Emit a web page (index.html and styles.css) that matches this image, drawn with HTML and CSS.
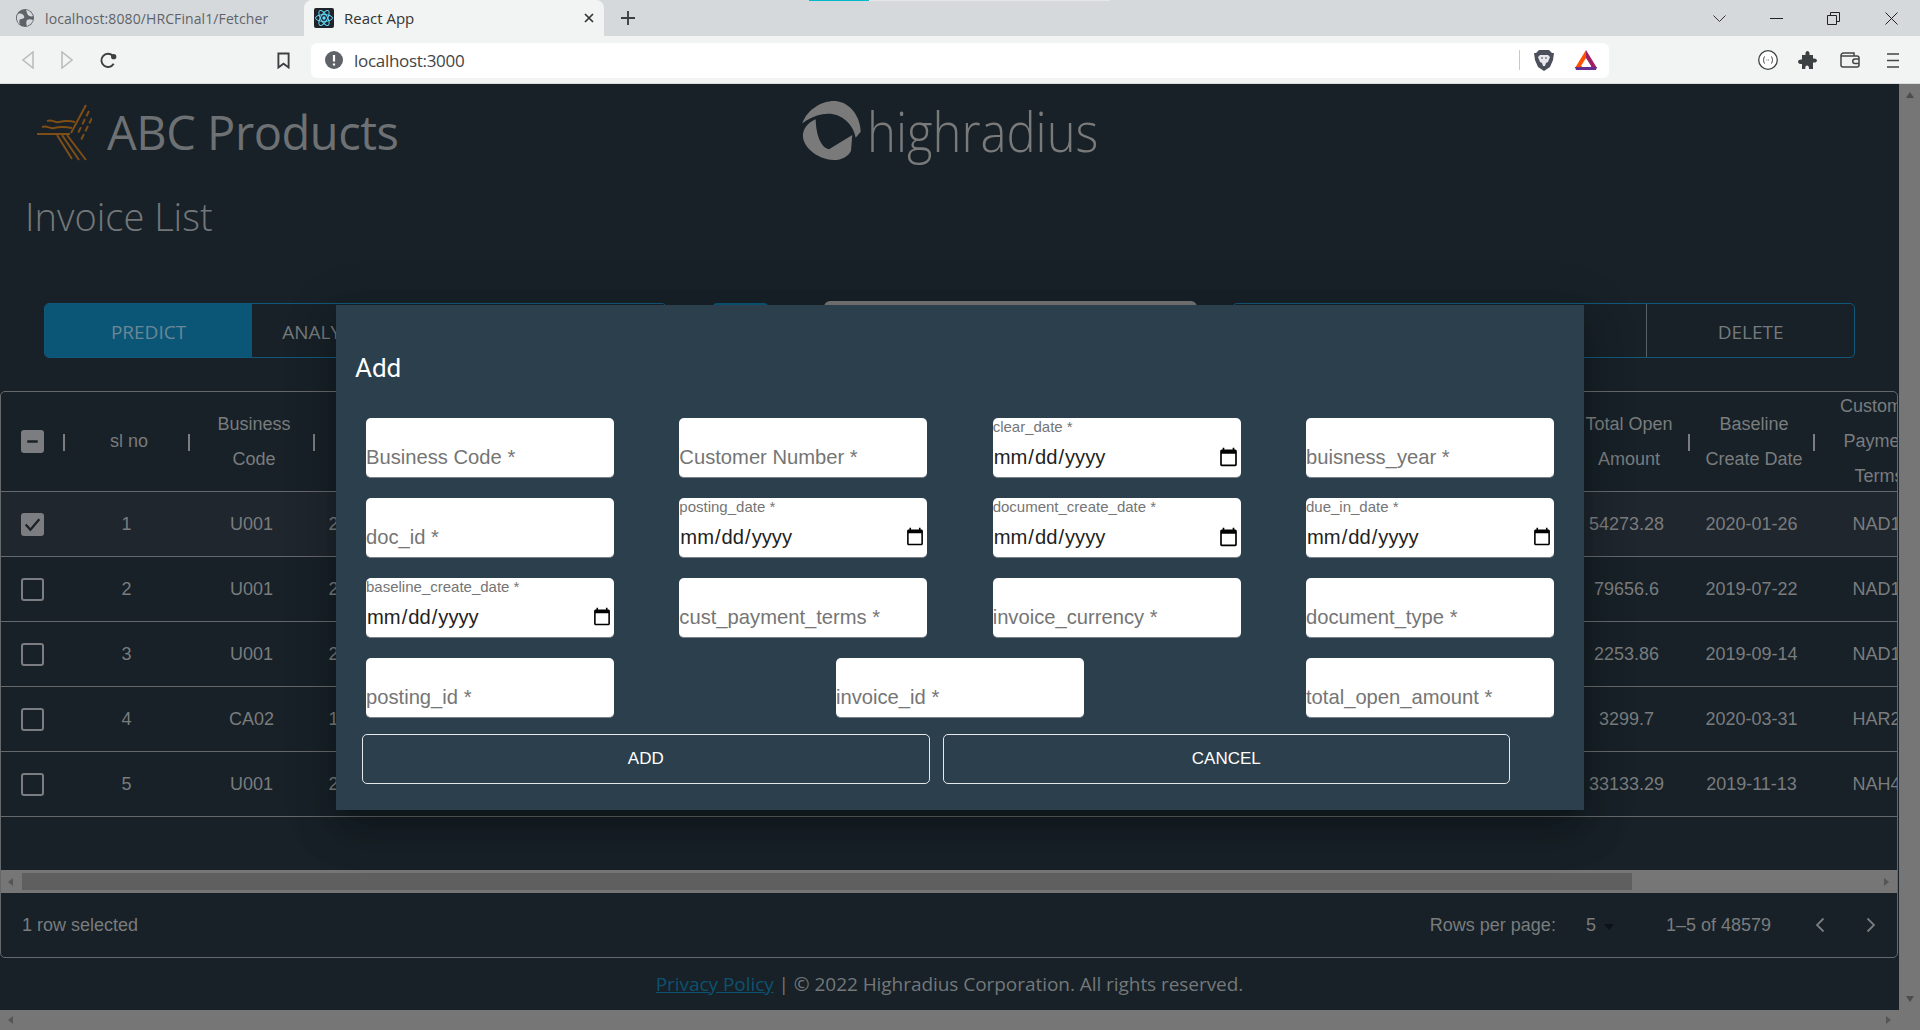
FILE: index.html
```html
<!DOCTYPE html>
<html lang="en">
<head>
<meta charset="utf-8">
<title>React App</title>
<link rel="stylesheet" href="styles.css">
</head>
<body>
<header class="chrome">
  <div class="tabstrip">
    <div class="load-line"></div>
    <div class="tab tab-off">
      <svg class="fav" viewBox="0 0 18 18"><circle cx="9" cy="9" r="9" fill="#5f6368"/><path d="M2 5c3-1 5 0 6 2s-1 3-3 3-2 3-1 6C1 13 0 8 2 5zM10 1c3 0 6 3 7 6-2 1-4 0-5-1s-1-3-2-5zM11 11c2-1 4-1 6 0-1 3-3 5-6 6-1-2-1-4 0-6z" fill="#d5d9dc"/></svg>
      <span class="tab-title">localhost:8080/HRCFinal1/Fetcher</span>
    </div>
    <div class="tab tab-on">
      <svg class="fav-react" viewBox="0 0 20 20"><rect width="20" height="20" rx="2" fill="#20232a"/><g fill="none" stroke="#61dafb" stroke-width="1"><ellipse cx="10" cy="10" rx="8.5" ry="3.4"/><ellipse cx="10" cy="10" rx="8.5" ry="3.4" transform="rotate(60 10 10)"/><ellipse cx="10" cy="10" rx="8.5" ry="3.4" transform="rotate(120 10 10)"/></g><circle cx="10" cy="10" r="1.7" fill="#61dafb"/></svg>
      <span class="tab-title tab-title-on">React App</span>
      <svg class="tab-x" viewBox="0 0 12 12"><path d="M2 2l8 8M10 2l-8 8" stroke="#333" stroke-width="1.7"/></svg>
    </div>
    <svg class="newtab" viewBox="0 0 16 16"><path d="M8 1v14M1 8h14" stroke="#3c4043" stroke-width="1.9"/></svg>
    <div class="winctl">
      <svg class="w-chev" viewBox="0 0 13 7"><path d="M.5.5l6 6 6-6" fill="none" stroke="#333"/></svg>
      <svg class="w-min" viewBox="0 0 13 1"><path d="M0 .5h13" stroke="#222"/></svg>
      <svg class="w-res" viewBox="0 0 13 13"><path d="M.5 3.5h9v9h-9zM3.5 3V.5h9v9H10" fill="none" stroke="#222"/></svg>
      <svg class="w-close" viewBox="0 0 13 13"><path d="M.5.5l12 12M12.5.5l-12 12" stroke="#222"/></svg>
    </div>
  </div>
  <div class="toolbar">
    <svg class="t-back" viewBox="0 0 12 18"><path d="M11 1v16L1 9z" fill="none" stroke="#bdbdbd" stroke-width="1.6"/></svg>
    <svg class="t-fwd" viewBox="0 0 12 18"><path d="M1 1v16l10-8z" fill="none" stroke="#bdbdbd" stroke-width="1.6"/></svg>
    <svg class="t-reload" viewBox="0 0 18 18"><path d="M14.5 12.5A7 7 0 1 1 13.5 4" fill="none" stroke="#3c4043" stroke-width="2"/><circle cx="14.5" cy="5" r="2.8" fill="#3c4043"/></svg>
    <svg class="t-mark" viewBox="0 0 14 18"><path d="M1.5 1.5h11v15L7 12.5l-5.500 4z" fill="none" stroke="#3c4043" stroke-width="2"/></svg>
    <div class="omnibox">
      <svg class="o-info" viewBox="0 0 18 18"><circle cx="9" cy="9" r="9" fill="#5f6368"/><path d="M9 4v6.500M9 12.500v2" stroke="#fff" stroke-width="2.200"/></svg>
      <span class="url">localhost:3000</span>
      <span class="o-div"></span>
      <svg class="o-lion" viewBox="0 0 20 22"><path d="M5 1h10l3 3 2 0-1 7-3 7-6 4-6-4-3-7-1-7 2 0z" fill="#4b4f5c"/><path d="M6 6h8l2 2-2 5-2 1-1 3H9l-1-3-2-1-2-5z" fill="#e8e8ec"/><path d="M7 9h2M11 9h2" stroke="#4b4f5c" stroke-width="1.200"/></svg>
      <svg class="o-tri" viewBox="0 0 22 20"><path d="M11 0L0 18h6L11 9z" fill="#ff5000"/><path d="M11 0l11 18h-5L11 9z" fill="#9e1f63"/><path d="M0 17h22l-1 3H1z" fill="#662d91"/><path d="M6 16h10l-5-8z" fill="#fff"/></svg>
    </div>
    <svg class="t-ring" viewBox="0 0 20 20"><circle cx="10" cy="10" r="9.300" fill="#fff" stroke="#444" stroke-width="1.300"/><path d="M7 6.500c-1.500 0-1 2.500-1.500 3.500.5 1 0 3.500 1.500 3.500M13 6.500c1.500 0 1 2.500 1.500 3.500-.5 1 0 3.500-1.500 3.500M8.500 10h.8M10 10h.8" fill="none" stroke="#555"/></svg>
    <svg class="t-puzzle" viewBox="0 0 19 18"><path d="M4 4h3.500C7 1 8.500 0 9.500 0s2.500 1 2 4H15v3.500c3-.5 4 1 4 2s-1 2.500-4 2V18h-4c.3-2.500-1-3.500-2-3.500S7 15.500 7.300 18H4v-5c-2.500.5-4-1-4-2.300S1.500 8 4 8.500z" fill="#3c4043"/></svg>
    <svg class="t-wallet" viewBox="0 0 20 16"><path d="M1 4V3.500A2.500 2.500 0 0 1 3.500 1H14v3M1 4h16a2 2 0 0 1 2 2v7a2 2 0 0 1-2 2H3a2 2 0 0 1-2-2zM19 7h-4a2 2 0 0 0 0 4.500h4" fill="none" stroke="#444" stroke-width="1.500"/></svg>
    <svg class="t-menu" viewBox="0 0 12 15"><path d="M0 1h12M0 7.500h12M0 14h12" stroke="#444" stroke-width="1.500"/></svg>
  </div>
</header>

<div class="viewport">
  <div class="page">
    <div class="content">
      <div class="brand">
        <svg class="abc-logo" viewBox="0 0 62 60">
          <g fill="none" stroke="#7f4e17" stroke-width="2">
            <path d="M56 3L41 31"/>
            <path d="M59 9L47 33" stroke-dasharray="6 3"/>
            <path d="M62 16L50 40" stroke-dasharray="6 3"/>
            <path d="M7 32h33"/>
            <path d="M17 19c5-2 8 2 12 1s8-2 16 0"/>
            <path d="M12 25c5-2 8 2 12 1s8-2 18 0"/>
            <path d="M27 33l15 24M32 33l17 25M37 33l19 25"/>
          </g>
        </svg>
        <span class="abc-name">ABC Products</span>
        <svg class="hr-logo" viewBox="0 0 360 240">
          <path d="M40 100C55 55 105 30 140 33c45 4 75 50 75 92l-15 18c-8-45-50-80-100-70-25 5-45 15-60 27z" fill="#7a7a7a"/>
          <path d="M80 88C50 100 40 125 42 142c4 35 50 68 92 68 25 0 45-12 52-28l4-47-70 43c-25-5-40-45-40-96z" fill="#7a7a7a"/>
        </svg>
        <span class="hr-name">highradius</span>
      </div>
      <h1 class="page-title">Invoice List</h1>
      <div class="actions">
        <div class="btn-group">
          <span class="act act-on">PREDICT</span>
          <span class="act">ANALYTICS VIEW</span>
          <span class="act">ADVANCED SEARCH</span>
        </div>
        <span class="search-btn"></span>
        <span class="search-box"></span>
        <div class="btn-group">
          <span class="act">ADD</span>
          <span class="act">EDIT</span>
          <span class="act act-div">DELETE</span>
        </div>
      </div>

      <section class="card">
        <div class="tbl">
          <div class="tr th">
            <div class="cell sep"><span class="cb cb-on"><svg viewBox="0 0 22 22"><path d="M6 11h10" stroke="#1b2228" stroke-width="2.500"/></svg></span></div>
            <div class="cell sep hd">sl no</div>
            <div class="cell sep hd">Business<br>Code</div>
            <div class="cell"></div>
            <div class="cell"></div>
            <div class="cell sep hd">Total Open<br>Amount</div>
            <div class="cell sep hd">Baseline<br>Create Date</div>
            <div class="cell hd">Customer<br>Payment<br>Terms</div>
          </div>
          <div class="tr selected">
            <div class="cell"><span class="cb cb-on"><svg viewBox="0 0 22 22"><path d="M4.500 11l4.500 5 8.500-10" fill="none" stroke="#1b2228" stroke-width="2.200"/></svg></span></div>
            <div class="cell">1</div><div class="cell">U001</div><div class="cell num">200769623</div><div class="cell"></div>
            <div class="cell">54273.28</div><div class="cell">2020-01-26</div><div class="cell">NAD1</div>
          </div>
          <div class="tr">
            <div class="cell"><span class="cb"></span></div>
            <div class="cell">2</div><div class="cell">U001</div><div class="cell num">200980828</div><div class="cell"></div>
            <div class="cell">79656.6</div><div class="cell">2019-07-22</div><div class="cell">NAD1</div>
          </div>
          <div class="tr">
            <div class="cell"><span class="cb"></span></div>
            <div class="cell">3</div><div class="cell">U001</div><div class="cell num">200792734</div><div class="cell"></div>
            <div class="cell">2253.86</div><div class="cell">2019-09-14</div><div class="cell">NAD1</div>
          </div>
          <div class="tr">
            <div class="cell"><span class="cb"></span></div>
            <div class="cell">4</div><div class="cell">CA02</div><div class="cell num">140105686</div><div class="cell"></div>
            <div class="cell">3299.7</div><div class="cell">2020-03-31</div><div class="cell">HAR2</div>
          </div>
          <div class="tr">
            <div class="cell"><span class="cb"></span></div>
            <div class="cell">5</div><div class="cell">U001</div><div class="cell num">200769623</div><div class="cell"></div>
            <div class="cell">33133.29</div><div class="cell">2019-11-13</div><div class="cell">NAH4</div>
          </div>
        </div>
        <div class="tbl-scroll">
          <i class="arrow arrow-l"></i>
          <div class="tbl-track"><div class="tbl-thumb"></div></div>
          <i class="arrow arrow-r"></i>
        </div>
        <div class="tbl-foot">
          <span>1 row selected</span>
          <div class="pager">
            <span>Rows per page:</span>
            <span class="pg-size">5<i class="pg-caret"></i></span>
            <span>1–5 of 48579</span>
            <svg class="pg-ico pg-prev" viewBox="0 0 10 16"><path d="M8.500 1.500L2 8l6.500 6.500" fill="none" stroke="#7a7c7e" stroke-width="1.800"/></svg>
            <svg class="pg-ico pg-next" viewBox="0 0 10 16"><path d="M1.500 1.500L8 8l-6.500 6.500" fill="none" stroke="#7a7c7e" stroke-width="1.800"/></svg>
          </div>
        </div>
      </section>

      <footer class="legal"><a class="legal-link" href="#">Privacy Policy</a> | © 2022 Highradius Corporation. All rights reserved.</footer>
    </div>
    <div class="hbar">
      <i class="arrow arrow-l"></i>
      <i class="arrow arrow-r"></i>
    </div>
  </div>
  <div class="vbar">
    <i class="arrow arrow-u"></i>
    <i class="arrow arrow-d"></i>
  </div>
</div>

<div class="dialog">
  <h2 class="dialog-title">Add</h2>
  <form class="fields">
    <div class="frow">
      <div class="field"><input placeholder="Business Code *"></div>
      <div class="field"><input placeholder="Customer Number *"></div>
      <div class="field"><label>clear_date *</label><input type="date"></div>
      <div class="field"><input placeholder="buisness_year *"></div>
    </div>
    <div class="frow">
      <div class="field"><input placeholder="doc_id *"></div>
      <div class="field"><label>posting_date *</label><input type="date"></div>
      <div class="field"><label>document_create_date *</label><input type="date"></div>
      <div class="field"><label>due_in_date *</label><input type="date"></div>
    </div>
    <div class="frow">
      <div class="field"><label>baseline_create_date *</label><input type="date"></div>
      <div class="field"><input placeholder="cust_payment_terms *"></div>
      <div class="field"><input placeholder="invoice_currency *"></div>
      <div class="field"><input placeholder="document_type *"></div>
    </div>
    <div class="frow">
      <div class="field"><input placeholder="posting_id *"></div>
      <div class="field"><input placeholder="invoice_id *"></div>
      <div class="field"><input placeholder="total_open_amount *"></div>
    </div>
  </form>
  <div class="dialog-actions">
    <button class="dlg-btn" type="button">ADD</button>
    <button class="dlg-btn" type="button">CANCEL</button>
  </div>
</div>
</body>
</html>
```

FILE: styles.css
```css
* { box-sizing: border-box; }
html, body { margin: 0; height: 1030px; overflow: hidden; }
body { display: flex; flex-direction: column; font-family: "Liberation Sans", Arial, sans-serif; background: #172127; }
svg { display: block; flex: none; }
i { display: block; }

/* browser chrome */
.chrome { flex: none; font-family: "Open Sans", sans-serif; }
.tabstrip { position: relative; height: 36px; background: #d5d9dc; display: flex; align-items: flex-end; }
.load-line { position: absolute; left: 809px; top: 0; width: 301px; height: 1px; background: linear-gradient(90deg, #00b9c9 0 60px, #e6e6e6 60px); }
.tab { height: 36px; display: flex; align-items: center; font-size: 14px; }
.tab-off { width: 304px; padding-left: 16px; color: #5f6368; }
.tab-on { width: 300px; padding-left: 10px; background: #f2f3f3; border-radius: 8px 8px 0 0; color: #333; }
.fav { width: 18px; height: 18px; margin-right: 11px; }
.fav-react { width: 20px; height: 20px; margin-right: 10px; }
.tab-title { white-space: nowrap; letter-spacing: .1px; }
.tab-title-on { font-size: 15px; letter-spacing: 0; }
.tab-x { width: 12px; height: 12px; margin-left: auto; margin-right: 9px; }
.newtab { width: 16px; height: 16px; margin: 0 0 10px 16px; }
.winctl { margin-left: auto; height: 36px; display: flex; align-items: center; padding-right: 22px; }
.w-chev { width: 13px; height: 7px; }
.w-min { width: 13px; height: 1px; margin-left: 44px; }
.w-res { width: 13px; height: 13px; margin-left: 44px; }
.w-close { width: 13px; height: 13px; margin-left: 45px; }

.toolbar { height: 48px; background: #f2f3f3; border-bottom: 1px solid #dcdcdc; display: flex; align-items: center; padding-top: 1px; }
.t-back { width: 12px; height: 18px; margin-left: 22px; }
.t-fwd { width: 12px; height: 18px; margin-left: 27px; }
.t-reload { width: 17px; height: 17px; margin-left: 27px; }
.t-mark { width: 13px; height: 17px; margin-left: 160px; }
.omnibox { width: 1298px; height: 35px; margin-left: 21px; background: #fff; border-radius: 6px; display: flex; align-items: center; padding-left: 14px; }
.o-info { width: 18px; height: 18px; }
.url { margin-left: 11px; font-size: 17px; letter-spacing: -.3px; color: #444; }
.o-div { width: 1px; height: 20px; background: #c8c8c8; margin-left: auto; }
.o-lion { width: 20px; height: 22px; margin-left: 14px; }
.o-tri { width: 22px; height: 20px; margin: 0 12px 0 21px; }
.t-ring { width: 20px; height: 20px; margin-left: 149px; }
.t-puzzle { width: 19px; height: 18px; margin-left: 20px; }
.t-wallet { width: 20px; height: 16px; margin-left: 23px; }
.t-menu { width: 12px; height: 15px; margin-left: 27px; }

/* page */
.viewport { flex: 1; display: flex; min-height: 0; }
.page { width: 1899px; display: flex; flex-direction: column; }
.content { height: 926px; display: flex; flex-direction: column; color: #7a7c7e; }
.vbar { width: 21px; background: #767676; display: flex; flex-direction: column; align-items: center; justify-content: space-between; padding: 8px 0 28px; }
.hbar { height: 20px; background: #767676; display: flex; align-items: center; justify-content: space-between; padding: 0 8px; }
.arrow { width: 0; height: 0; border: 4px solid transparent; flex: none; }
.arrow-l { border-right: 5px solid #555; border-left-width: 0; }
.arrow-r { border-left: 5px solid #555; border-right-width: 0; }
.arrow-u { border-bottom: 6px solid #4d4d4d; border-top-width: 0; }
.arrow-d { border-top: 6px solid #4d4d4d; border-bottom-width: 0; }

.brand { height: 96px; display: flex; align-items: center; padding: 0 0 2px 30px; flex: none; }
.abc-logo { width: 62px; height: 60px; margin-top: 2px; }
.abc-name { font-family: "Open Sans", sans-serif; font-size: 47px; color: #6e7174; margin: 2px 0 0 15px; letter-spacing: -.45px; white-space: nowrap; }
.hr-logo { width: 120px; height: 80px; margin: -2px 0 0 390px; }
.hr-name { font-family: "Open Sans", sans-serif; font-weight: 300; font-size: 56px; color: #7a7a7a; margin: -2px 0 0 -42px; white-space: nowrap; transform: scaleX(.875); transform-origin: left center; }
.page-title { height: 72px; margin: 0; padding-left: 25px; font-family: "Open Sans", sans-serif; font-weight: 300; font-size: 38px; line-height: 72px; color: #74777a; flex: none; }

.actions { height: 55px; margin: 51px 0 33px 44px; width: 1812px; display: flex; flex: none; }
.btn-group { width: 623px; height: 55px; display: flex; border: 1px solid #12587a; border-radius: 5px; overflow: hidden; flex: none; }
.act { flex: 1 1 0; display: flex; align-items: center; justify-content: center; padding-top: 2px; font-family: "Open Sans", sans-serif; font-size: 19px; color: #757a7d; white-space: nowrap; }
.act-on { background: #0b5676; color: #6b8796; }
.act-div { border-left: 1px solid #5a6165; }
.search-btn { width: 55px; height: 55px; margin-left: 46px; background: #0b5676; border-radius: 4px; flex: none; }
.search-box { width: 373px; height: 60px; margin: -2px 35px 0 56px; background: #757575; border-radius: 6px; flex: none; }

.card { height: 567px; margin-right: 1px; border: 1px solid #66696b; border-radius: 5px; overflow: hidden; flex: none; display: flex; flex-direction: column; }
.tbl { height: 478px; flex: none; overflow: hidden; font-size: 18px; }
.tr { height: 65px; display: grid; grid-template-columns: 63px 125px 125px 125px 1125px 125px 125px 125px; grid-template-rows: 64px; border-bottom: 1px solid #66696b; width: 1938px; }
.th { height: 100px; line-height: 35px; grid-template-rows: 99px; }
.selected { background: #1f262d; }
.cell { position: relative; min-height: 0; display: flex; align-items: center; justify-content: center; text-align: center; white-space: nowrap; }
.th .hd { padding-left: 5px; }
.num { padding-right: 6px; }
.sep::after { content: ""; position: absolute; right: -1px; top: 42px; width: 2px; height: 17px; background: #7b7d80; }
.cb { width: 23px; height: 23px; border: 2.5px solid #7b7d80; border-radius: 3px; }
.cb svg { width: 100%; height: 100%; }
.cb-on { background: #7b7d80; border: 0; }
.tbl-scroll { height: 23px; background: #767676; display: flex; align-items: center; flex: none; padding: 0 8px 0 7px; }
.tbl-track { flex: 1; height: 17px; margin: 0 6px 0 9px; }
.tbl-thumb { width: 1610px; height: 17px; background: #5f5f5f; }
.tbl-foot { flex: 1; display: flex; align-items: center; justify-content: space-between; padding: 0 0 0 21px; font-size: 18px; }
.pager { display: flex; align-items: center; margin-right: 21px; }
.pg-size { display: flex; align-items: center; margin-left: 30px; width: 80px; }
.pg-caret { margin: 4px 0 0 8px; border: 5px solid transparent; border-top: 6px solid #0c1216; border-bottom-width: 0; }
.pg-ico { width: 10px; height: 16px; }
.pg-prev { margin-left: 44px; }
.pg-next { margin-left: 41px; }
.legal { height: 52px; flex: none; display: flex; align-items: center; justify-content: center; font-family: "Open Sans", sans-serif; font-size: 19px; letter-spacing: -.05px; color: #74787a; white-space: pre; }
.legal-link { color: #0d5270; }

/* dialog */
.dialog { position: absolute; left: 336px; top: 305px; width: 1248px; height: 505px; background: #2b3f4d; box-shadow: 0 11px 15px -7px rgba(0,0,0,.2), 0 24px 38px 3px rgba(0,0,0,.14), 0 9px 46px 8px rgba(0,0,0,.12); }
.dialog-title { height: 113px; margin: 0; padding: 46px 0 0 19px; font: 400 26px/34px Roboto, sans-serif; color: #fff; }
.fields { padding: 0 30px; display: flex; flex-direction: column; gap: 20px; }
.frow { display: flex; justify-content: space-between; }
.field { width: 248px; height: 60px; background: #fff; border-radius: 5px; border-bottom: 1px solid #7b8085; display: flex; flex-direction: column; justify-content: flex-end; padding-bottom: 8px; }
.field label { font-size: 15px; line-height: 14px; color: #757575; margin-bottom: auto; margin-top: 2px; white-space: nowrap; }
.field input { width: 100%; height: 24px; border: 0; padding: 0; margin: 0; background: transparent; outline: 0; font: 20.2px/24px "Liberation Sans", Arial, sans-serif; color: #222; }
.field input::placeholder { color: #757575; opacity: 1; }
.dialog-actions { display: flex; gap: 13px; padding: 16px 0 0 26px; }
.dlg-btn { width: 567.5px; height: 50px; background: transparent; border: 1.5px solid #e4e8eb; border-radius: 5px; color: #fff; font: 17px "Liberation Sans", Arial, sans-serif; }
```
